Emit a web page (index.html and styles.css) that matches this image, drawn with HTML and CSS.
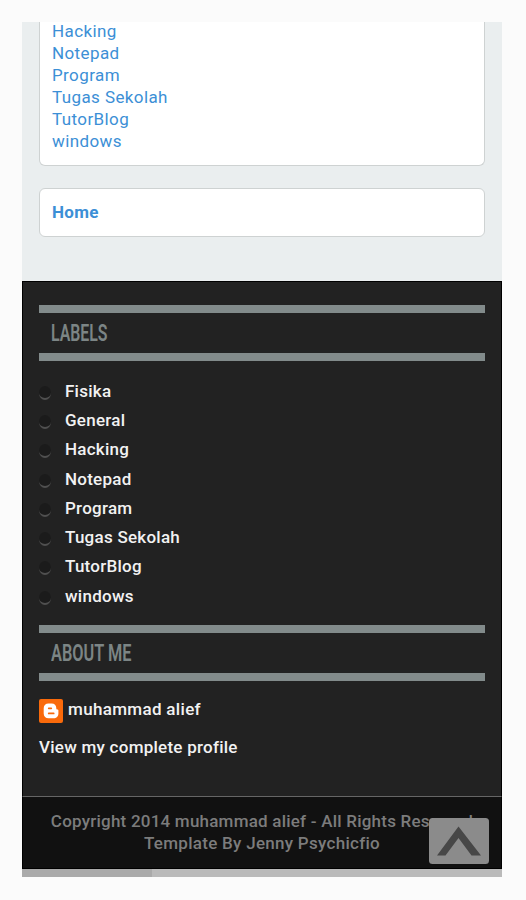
FILE: index.html
```html
<!DOCTYPE html>
<html lang="id">
<head>
<meta charset="utf-8">
<title>Labels</title>
<link rel="stylesheet" href="styles.css">
</head>
<body>
<div class="page">
  <main class="content">
    <ul class="card card-links">
      <li><a>Hacking</a></li>
      <li><a>Notepad</a></li>
      <li><a>Program</a></li>
      <li><a>Tugas Sekolah</a></li>
      <li><a>TutorBlog</a></li>
      <li><a>windows</a></li>
    </ul>
    <nav class="card card-home"><a>Home</a></nav>
  </main>
  <aside class="sidebar">
    <h2 class="heading heading-labels"><span>LABELS</span></h2>
    <ul class="labels">
      <li><i class="bullet"></i>Fisika</li>
      <li><i class="bullet"></i>General</li>
      <li><i class="bullet"></i>Hacking</li>
      <li><i class="bullet"></i>Notepad</li>
      <li><i class="bullet"></i>Program</li>
      <li><i class="bullet"></i>Tugas Sekolah</li>
      <li><i class="bullet"></i>TutorBlog</li>
      <li><i class="bullet"></i>windows</li>
    </ul>
    <h2 class="heading"><span>ABOUT ME</span></h2>
    <div class="author">
      <svg class="blogger" viewBox="0 0 24 24"><rect width="24" height="24" rx="2" fill="#f96a0b"/><path d="M9.500 4.500h3.200c2.800 0 4.600 2 4.600 4.400v.6c0 .8.4 1.100 1.100 1.100.6 0 1 .4 1 1v2.800c0 2.800-2 4.800-4.800 4.800H9.500c-2.800 0-4.800-2-4.800-4.800V9.300c0-2.800 2-4.800 4.800-4.800z" fill="#fff"/><path d="M9.700 9.300h2.600M9.700 14.400h5" stroke="#f96a0b" stroke-width="1.700" stroke-linecap="round"/></svg>
      <span>muhammad alief</span>
    </div>
    <div class="profile">View my complete profile</div>
  </aside>
  <footer class="footer">
    <p class="copyright">Copyright 2014 muhammad alief - All Rights Reserved</p>
    <p class="template">Template By Jenny Psychicfio</p>
    <svg class="to-top" viewBox="0 0 60 46"><rect width="60" height="46" rx="3.500" fill="#8b8b8b"/><path d="M8 37.500 29.500 8.500 52 37.500h-9.500L29.500 20 16.500 37.500z" fill="#474747"/></svg>
  </footer>
  <div class="scrollbar"><div class="thumb"></div></div>
</div>
</body>
</html>
```
FILE: styles.css
```css
* { box-sizing: border-box; margin: 0; padding: 0; }
body {
  padding: 22px;
  background: #fbfbfb;
  font: 17px/22px Roboto, "Liberation Sans", sans-serif;
}
ul { list-style: none; }
.page { width: 480px; height: 855px; overflow: hidden; }
.content { height: 259px; padding: 0 17px; background: #eaeeef; overflow: hidden; }
.card { background: #fff; border: 1px solid #ced2d2; padding-left: 12px; color: #3c8fd6; }
.card-links { height: 146px; margin-top: -2px; border-top: 0; border-radius: 0 0 6px 6px; letter-spacing: .4px; }
.card-home { height: 49px; margin-top: 22px; padding-top: 12px; border-radius: 6px; font-weight: 700; letter-spacing: .3px; }
.sidebar {
  height: 515px;
  padding: 23px 16px 0;
  background: #222;
  border: 1px solid #000;
  border-bottom: 0;
  color: #f2f2f2;
  font-weight: 500;
  letter-spacing: .25px;
}
.heading {
  height: 56px;
  padding-left: 12px;
  border: solid #828b8b;
  border-width: 8px 0;
  color: #7c8585;
  font: 600 24px/40px Roboto, sans-serif;
  letter-spacing: 0;
}
.heading span { display: inline-block; transform: scaleX(.68); transform-origin: left; white-space: nowrap; }
.heading-labels span { transform: scaleX(.66); }
.labels { padding-top: 15px; height: 264px; }
.labels li { display: flex; align-items: center; height: 29.300px; }
.bullet {
  width: 12px;
  height: 14px;
  margin: 4px 14px 0 0;
  border-radius: 50%;
  background: #1b1b1b;
  border-bottom: 2px solid #505050;
}
.author { display: flex; height: 24px; margin-top: 18px; line-height: 20px; letter-spacing: .32px; }
.blogger { width: 24px; height: 24px; margin-right: 5px; }
.profile { margin-top: 13px; }
.footer {
  position: relative;
  height: 73px;
  padding-top: 13px;
  background: #111;
  border: 1px solid #000;
  border-top-color: #666;
  color: #7c7c7c;
  text-align: center;
  font-weight: 500;
  letter-spacing: .22px;
}
.footer p { white-space: nowrap; }
.template { letter-spacing: .28px; }
.to-top { position: absolute; right: 12px; top: 21px; width: 60px; height: 46px; }
.scrollbar { height: 8px; padding-left: 130px; background: #aaa; }
.thumb { height: 8px; background: #bababa; }
```
